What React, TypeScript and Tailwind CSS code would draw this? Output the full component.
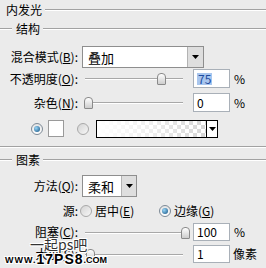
import React from 'react';

const Rule = ({ className = 'flex-1' }: { className?: string }) => (
  <div className={`${className} h-[2px] border-t border-b border-t-[#a2a2a2] border-b-white`} />
);

const Label = ({ children }: { children: React.ReactNode }) => (
  <span className="w-[80px] shrink-0 text-right pr-[2px] whitespace-nowrap">{children}</span>
);

const Arrow = () => (
  <svg width="7" height="4" viewBox="0 0 7 4">
    <path d="M0 0h7L3.5 4z" fill="#000" />
  </svg>
);

const DropBtn = ({ w = 'w-[16px]' }: { w?: string }) => (
  <div className={`${w} h-full bg-[#dedede] border-l border-[#b3b3b3] flex items-center justify-center`}>
    <Arrow />
  </div>
);

const Slider = ({ pct }: { pct: number }) => (
  <div className="relative ml-[5px] w-[98px] h-full shrink-0">
    <div className="absolute left-0 right-0 top-[9px] h-[2px] border-t border-b border-t-[#a8a8a8] border-b-white" />
    <div
      className="absolute top-[4px] w-[9px] h-[12px] rounded-t-[4px] rounded-b-[1px] border border-[#8a8a8a] bg-gradient-to-b from-white to-[#cdcdcd]"
      style={{ left: Math.round(pct * 97) - 1 }}
    />
  </div>
);

const Field = ({ children }: { children: React.ReactNode }) => (
  <div className="ml-[10px] w-[37px] h-full shrink-0 bg-white border border-[#a9b0b8] flex items-center pl-[3px]">
    {children}
  </div>
);

const Radio = ({ on }: { on?: boolean }) => (
  <div
    className={`w-[12px] h-[12px] shrink-0 rounded-full border flex items-center justify-center ${
      on ? 'border-[#7d8a96] bg-gradient-to-b from-[#e4e4e4] to-white' : 'border-[#a9a9a9] bg-gradient-to-br from-[#d4d4d4] to-[#f7f7f7]'
    }`}
  >
    {on && <div className="w-[6px] h-[6px] rounded-full bg-[radial-gradient(circle_at_35%_35%,#9ad6f7,#0f4f80)]" />}
  </div>
);

export default function App() {
  return (
    <div className="relative w-[266px] h-[268px] overflow-hidden bg-[#ebebeb] text-[12px] leading-none text-black font-['Noto_Sans_CJK_SC',sans-serif]">
      <div className="h-[20px] flex items-center">
        <span className="pl-[6px] pr-[3px]">内发光</span>
        <Rule />
      </div>
      <div className="h-[18px] flex items-center">
        <Rule className="w-[12px]" />
        <span className="pl-[4px] pr-[3px]">结构</span>
        <Rule />
      </div>

      <div className="mt-[8px] h-[22px] flex items-center">
        <Label>混合模式(<u>B</u>):</Label>
        <div className="ml-[2px] w-[122px] h-[22px] flex bg-white border border-[#8e8e8e]">
          <span className="flex-1 flex items-center pl-[5px] text-[13px]">叠加</span>
          <DropBtn />
        </div>
      </div>

      <div className="mt-[1px] h-[19px] flex items-center">
        <Label>不透明度(<u>O</u>):</Label>
        <Slider pct={0.75} />
        <Field>
          <span className="bg-[#a9c6ee] text-[#1d4c9e] px-[1px]">75</span>
        </Field>
        <span className="ml-[4px]">%</span>
      </div>

      <div className="mt-[5px] h-[19px] flex items-center">
        <Label>杂色(<u>N</u>):</Label>
        <Slider pct={0} />
        <Field>0</Field>
        <span className="ml-[4px]">%</span>
      </div>

      <div className="mt-[8px] h-[17px] flex items-center pl-[31px]">
        <Radio on />
        <div className="ml-[5px] w-[16px] h-[17px] bg-white border border-[#9a9a9a]" />
        <div className="ml-[13px]">
          <Radio />
        </div>
        <div className="ml-[7px] w-[122px] h-[18px] flex border border-black overflow-hidden">
          <div className="relative flex-1 bg-[repeating-conic-gradient(#d6d6d6_0%_25%,#ffffff_0%_50%)] bg-[length:8px_8px]">
            <div className="absolute inset-0 bg-gradient-to-r from-white via-white/60 to-white/0" />
          </div>
          <div className="w-[11px] h-full bg-white border-l border-black flex items-center justify-center">
            <Arrow />
          </div>
        </div>
      </div>

      <div className="mt-[9px]">
        <Rule className="w-full" />
      </div>

      <div className="h-[24px] flex items-center">
        <Rule className="w-[12px]" />
        <span className="pl-[4px] pr-[3px]">图素</span>
        <Rule />
      </div>

      <div className="mt-[3px] h-[22px] flex items-center">
        <Label>方法(<u>Q</u>):</Label>
        <div className="ml-[2px] w-[55px] h-[22px] flex bg-white border border-[#8e8e8e]">
          <span className="flex-1 flex items-center pl-[5px] text-[13px]">柔和</span>
          <DropBtn w="w-[15px]" />
        </div>
      </div>

      <div className="mt-[5px] h-[18px] flex items-center">
        <Label>源:</Label>
        <div className="w-[79px] flex items-center">
          <Radio />
          <span className="ml-[3px]">居中(<u>E</u>)</span>
        </div>
        <Radio on />
        <span className="ml-[3px]">边缘(<u>G</u>)</span>
      </div>

      <div className="mt-[3px] h-[18px] flex items-center">
        <Label>阻塞(<u>C</u>):</Label>
        <Slider pct={1} />
        <Field>100</Field>
        <span className="ml-[4px]">%</span>
      </div>

      <div className="mt-[4px] h-[18px] flex items-center">
        <Label>大小(<u>S</u>):</Label>
        <Slider pct={0.02} />
        <Field>1</Field>
        <span className="ml-[3px]">像素</span>
      </div>

      {/* watermark over the last rows */}
      <div className="absolute left-[30px] top-[237px] text-[14px] text-[#333] [text-shadow:1px_1px_0_#fff,-1px_-1px_0_#fff,1px_-1px_0_#fff,-1px_1px_0_#fff]">
        一起ps吧
      </div>
      <div className="absolute left-[5px] top-[253px] flex items-end font-black text-black font-['Liberation_Sans',sans-serif] [text-shadow:1px_1px_0_#fff,-1px_-1px_0_#fff,1px_-1px_0_#fff,-1px_1px_0_#fff]">
        <span className="text-[9px] leading-[9px] tracking-[1px]">WWW.</span>
        <span className="text-[14px] leading-[12px] tracking-[1px]">17PS8</span>
        <span className="text-[9px] leading-[9px]">.COM</span>
      </div>
    </div>
  );
}
